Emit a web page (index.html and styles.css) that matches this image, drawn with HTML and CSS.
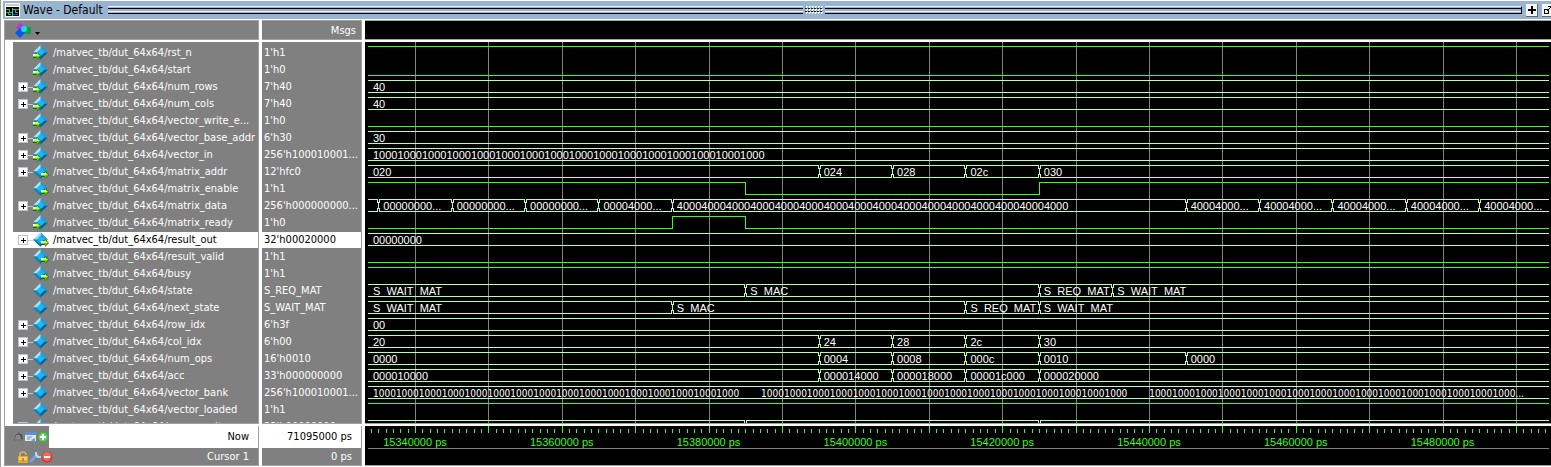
FILE: index.html
```html
<!DOCTYPE html>
<html lang="en">
<head>
<meta charset="utf-8">
<title>Wave - Default</title>
<link rel="stylesheet" href="styles.css">
</head>
<body>
<svg class="defs" aria-hidden="true">
  <symbol id="gem" viewBox="0 0 15 15">
    <path d="M7.500 14.500 0 7.500h15z" fill="#005f96"/>
    <path d="M7.500 0 15 7.500H7.500z" fill="#1c9fdc"/>
    <path d="M7.500 0 0 7.500h7.500z" fill="#a9e4fa"/>
    <path d="M0 7.500 7.500 15V7.500z" fill="#0d88bd"/>
    <path d="M7.500 3.500 11.500 7.500 7.500 11.500 3.500 7.500z" fill="#18b9f4"/>
  </symbol>
  <symbol id="arrow" viewBox="0 0 8 8">
    <path d="M0 2h4V0L8 4 4 8V6H0z" fill="#176b0b"/>
    <path d="M0 2h4V1l3 3-3 3V5H0z" fill="#5bd916"/>
    <path d="M0 2h4V1l3 3H0z" fill="#d9fb4a"/>
    <path d="M0 2h2v2H0z" fill="#fff"/>
  </symbol>
</svg>
<main class="window">
  <header class="titlebar">
    <svg class="app-icon" viewBox="0 0 15 14" shape-rendering="crispEdges" aria-hidden="true">
      <path fill="#fff" d="M0 0h15v14H0z"/><path fill="#000" d="M1 4h13v9H1z"/><path fill="#ccc" d="M1 1h13v2H1z"/>
      <path fill="none" stroke="#20bd65" d="M1 6.500h3v3h3M1 9.500h2v2h3M8 6.500h3M10 6v3h3M11 6.500h3"/>
      <path fill="#19d5e6" d="M7 5h1v8H7z"/><path fill="#5b2bff" d="M8 11h5v1H8z"/>
    </svg>
    <h1 class="title">Wave - Default</h1>
    <span class="grooves"></span><span class="grip"></span><span class="grooves end"></span>
    <button class="tool" aria-label="Zoom pane"><svg viewBox="0 0 12 12"><path d="M6 2v8M2 6h8" stroke="#000" stroke-width="2"/></svg></button>
    <button class="tool" aria-label="Undock"><svg viewBox="0 0 12 12" shape-rendering="crispEdges"><path d="M2.500 5.500h4v4h-4zM5 7l4-4M6 2.500h4v4" stroke="#000" fill="none"/></svg></button>
  </header>
  <section class="panes">
    <div class="head names-head">
      <button class="menu" aria-label="Column menu">
        <svg viewBox="0 0 26 16"><path d="M5 0 10 4 6 8 1 5z" fill="#c32be8"/><path d="M9 4h7v7H9z" fill="#159c42"/><path d="M5 5 10 10 5 15 0 10z" fill="#0758ea"/><circle cx="9" cy="6" r="3" fill="#10dcf3"/><path d="M20 9h5l-2.500 3z" fill="#000"/></svg>
      </button>
    </div>
    <div class="head msgs-head">Msgs</div>
    <div class="head wave-head"></div>
    <ul class="names" id="names"></ul>
    <ul class="msgs" id="msgs"></ul>
    <div class="waves"><div class="plot" id="plot"></div></div>
    <div class="foot">
      <div class="foot-row now">
        <div class="icons">
          <svg viewBox="0 0 36 12" aria-hidden="true">
            <path d="M1 8 3 3h2l1-2 1 2h2l1 5z" fill="#555"/><path d="M0 8h10v2H0z" fill="#777"/><path d="M3 5h4M2 7h6" stroke="#bbb"/>
            <path d="M12 1h11v9H12z" fill="#dce9fb"/><path d="M12 1h11v3H12z" fill="#5b91d6"/><path d="M14 6h5M14 8h3" stroke="#7c8fad"/><path d="m18 9 4-2v5z" fill="#7999c7"/>
            <circle cx="30" cy="6" r="5.500" fill="#45aa42"/><circle cx="30" cy="6" r="4.500" fill="#67c761"/><path d="M30 3v6M27 6h6" stroke="#fff" stroke-width="2"/>
          </svg>
        </div>
        <span class="foot-label">Now</span>
      </div>
      <div class="foot-row cursor">
        <div class="icons">
          <svg viewBox="0 0 36 12" aria-hidden="true">
            <path d="M3 6V3q0-2 3-2t3 3" fill="none" stroke="#d5b46b" stroke-width="1.500"/><path d="M1 5h10v7H1z" fill="#e5a72b"/><path d="M2 6h8v3H2z" fill="#f6cf69"/><path d="M6 7v3" stroke="#7b5615"/>
            <path d="m14 10 6-6" stroke="#6ea3e5" stroke-width="3" stroke-linecap="round"/><path d="M19 1v3l2 2h3" stroke="#b9d6f8" stroke-width="2" fill="none"/>
            <circle cx="30" cy="6" r="5.500" fill="#d43128"/><circle cx="30" cy="5.500" r="4.500" fill="#f06857"/><path d="M27 6h6" stroke="#fff" stroke-width="2"/>
          </svg>
        </div>
        <span class="foot-label">Cursor 1</span>
      </div>
    </div>
    <div class="foot">
      <div class="foot-row now"><span class="foot-label">71095000 ps</span></div>
      <div class="foot-row cursor"><span class="foot-label">0 ps</span></div>
    </div>
    <div class="foot timeline"><div class="ruler" id="ruler"></div></div>
  </section>
</main>
<script src="wave.js"></script>
</body>
</html>
```
FILE: styles.css
```css
:root {
  --ui: "DejaVu Sans Condensed", "Noto Sans", sans-serif;
  --digits: "Liberation Sans", sans-serif;
  --panel: #808080;
  --line: #a0a0a0;
  --bus: #b4ffb4;
  --logic: #33ff1a;
}
* { box-sizing: border-box; }
body { margin: 0; background: #f0f0f0; font: 11px/16px var(--ui); color: #fff; }
ul { margin: 0; padding: 0; list-style: none; }
button { margin: 0; padding: 0; border: 0; background: none; }
svg { display: block; }
.defs { position: absolute; width: 0; height: 0; }

.window { height: 100vh; display: flex; flex-direction: column; border-left: 1px solid var(--line); overflow: hidden; background: #fff; padding: 1px 0 1px 2px; }
.titlebar { display: flex; align-items: center; flex: none; height: 18px; background: #99b4d1; padding-left: 2px; overflow: hidden; }
.app-icon { width: 15px; height: 14px; flex: none; }
.title { margin: 0 5px 0 3px; font-size: 12px; font-weight: 400; line-height: 18px; color: #000; white-space: nowrap; }
.grooves { flex: 1; height: 8px; border-top: 1px solid #e8f4ff; border-bottom: 1px solid #000; background: linear-gradient(transparent 1px, #000 1px 2px, transparent 2px 4px, #e8f4ff 4px 5px, transparent 5px); }
.grooves.end { border-right: 1px solid #000; }
.grip { width: 18px; height: 8px; margin: 0 2px; background: conic-gradient(#fff 25%, transparent 0 50%, #222 0 75%, transparent 0) 0 0 / 3px 3px; }
.tool { flex: none; width: 12px; height: 13px; margin-left: 4px; background: #f4f4f4; border-right: 1px solid #666; border-bottom: 1px solid #666; }
.tool svg { width: 12px; height: 12px; }
.tool:last-child { margin-right: -3px; }

.panes { flex: 1; min-height: 0; display: grid; grid-template-columns: 254px 100px minmax(0, 1fr); grid-template-rows: 20px minmax(0, 1fr) 40px; column-gap: 3px; row-gap: 2px; margin-top: 1px; padding-left: 2px; background: linear-gradient(90deg, #fff 1px, var(--line) 1px 2px, #fff 2px); }
.head { background: var(--panel); border: solid var(--line); border-width: 1px 1px 1px 0; }
.menu { display: block; margin: 2px 0 0 10px; }
.menu svg { width: 26px; height: 16px; }
.msgs-head { text-align: right; line-height: 20px; padding-right: 5px; }
.wave-head { background: #000; border-right: 0; }

.names, .msgs { overflow: hidden; background: var(--panel); border: solid var(--line); border-width: 0 1px 1px 0; padding-top: 3px; }
.names { margin-left: 8px; }
.signal, .msg { height: 16px; margin-bottom: 1px; line-height: 16px; white-space: nowrap; overflow: hidden; }
.signal { display: flex; padding-left: 5px; }
.signal.selected, .msg.selected { background: #fff; color: #000; }
.msg { padding-left: 2px; }
.expander { flex: none; display: flex; align-items: center; width: 15px; height: 16px; }
.expander svg { width: 15px; height: 11px; }
.gem { flex: none; width: 16px; height: 15px; }
.gem svg { width: 16px; height: 15px; overflow: visible; }
.signal-name { padding-left: 4px; }

.waves { background: #000; overflow: hidden; border-bottom: 1px solid var(--line); padding: 0 2px 0 3px; }
.plot { position: relative; height: 100%; padding-top: 3px; }
.gridline { position: absolute; top: 0; bottom: 0; width: 1px; background: #808080; }
.trace { position: relative; display: flex; height: 17px; padding-top: 1px; }
.seg { position: relative; flex: none; height: 13px; white-space: pre; }
.seg.bus { border: solid var(--bus); border-width: 1px 0; padding-left: 5px; font: 11px/13px var(--digits); }
.seg.bus .value { display: block; height: 11px; overflow: hidden; }
.seg.bus.change::before { content: ""; position: absolute; left: -1px; top: -1px; width: 3px; height: 13px; background:
  linear-gradient(var(--bus) 4px, transparent 4px 9px, var(--bus) 9px) 0 0 / 1px 13px no-repeat,
  linear-gradient(transparent 3px, var(--bus) 3px 10px, transparent 10px) 1px 0 / 1px 13px no-repeat,
  linear-gradient(var(--bus) 4px, transparent 4px 9px, var(--bus) 9px) 2px 0 / 1px 13px no-repeat,
  #000; }
.seg.high { border-top: 1px solid var(--logic); }
.seg.low { border-bottom: 1px solid var(--logic); }
.seg.edge { border-left: 1px solid var(--logic); }
.seg.bus .chunks { display: grid; grid-template-columns: 33% 33% 34%; font: 10px/13px var(--ui); }

.foot { overflow: hidden; border: solid var(--line); border-width: 0 1px 1px 0; background: var(--panel); }
.foot-row { display: flex; justify-content: flex-end; align-items: center; padding-right: 9px; }
.now { height: 22px; background: #fff; color: #000; }
.cursor { height: 17px; }
.icons { align-self: stretch; display: flex; align-items: center; margin-right: auto; width: 44px; padding-left: 8px; background: var(--panel); }
.cursor .icons { width: 48px; padding-left: 12px; }
.icons svg { width: 36px; height: 12px; }
.timeline { background: #000; border-right: 0; padding: 0 2px 0 3px; }
.ruler { position: relative; height: 23px; border-bottom: 1px solid #808080; color: var(--logic); }
.tick { position: absolute; top: 3px; width: 1px; height: 4px; background: var(--logic); }
.tick.major { top: 0; height: 7px; }
.tick-label { position: absolute; top: 8px; transform: translateX(-50%); white-space: nowrap; font-family: var(--digits); }
```
FILE: wave.js
```js
const START = 15333600;
const END = 15494500;
const percent = t => (t - START) / (END - START) * 100 + '%';
const k = n => 15000000 + n * 1000;
const bank = '1000'.repeat(16);

// name, message, port direction, trace kind, [time, value] changes
const signals = [
  ['rst_n', "1'h1", 'in', 'logic', [[START, 1]]],
  ['start', "1'h0", 'in', 'logic', [[START, 0]]],
  ['num_rows', "7'h40", 'in', 'bus', [[START, '40']]],
  ['num_cols', "7'h40", 'in', 'bus', [[START, '40']]],
  ['vector_write_e...', "1'h0", 'in', 'logic', [[START, 0]]],
  ['vector_base_addr', "6'h30", 'in', 'bus', [[START, '30']]],
  ['vector_in', "256'h100010001...", 'in', 'bus', [[START, bank]]],
  ['matrix_addr', "12'hfc0", 'out', 'bus', [[START, '020'], [k(395), '024'], [k(405), '028'], [k(415), '02c'], [k(425), '030']]],
  ['matrix_enable', "1'h1", 'out', 'logic', [[START, 1], [k(385), 0], [k(425), 1]]],
  ['matrix_data', "256'h000000000...", 'in', 'bus', [[START, ''], [k(335), '00000000...'], [k(345), '00000000...'], [k(355), '00000000...'], [k(365), '00004000...'], [k(375), '4000'.repeat(16)], [k(445), '40004000...'], [k(455), '40004000...'], [k(465), '40004000...'], [k(475), '40004000...'], [k(485), '40004000...']]],
  ['matrix_ready', "1'h0", 'in', 'logic', [[START, 0], [k(375), 1], [k(385), 0]]],
  ['result_out', "32'h00020000", 'out', 'bus', [[START, '00000000']]],
  ['result_valid', "1'h1", 'out', 'logic', [[START, 0]]],
  ['busy', "1'h1", 'out', 'logic', [[START, 1]]],
  ['state', 'S_REQ_MAT', '', 'enum', [[START, 'S_WAIT_MAT'], [k(385), 'S_MAC'], [k(425), 'S_REQ_MAT'], [k(435), 'S_WAIT_MAT']]],
  ['next_state', 'S_WAIT_MAT', '', 'enum', [[START, 'S_WAIT_MAT'], [k(375), 'S_MAC'], [k(415), 'S_REQ_MAT'], [k(425), 'S_WAIT_MAT']]],
  ['row_idx', "6'h3f", '', 'bus', [[START, '00']]],
  ['col_idx', "6'h00", '', 'bus', [[START, '20'], [k(395), '24'], [k(405), '28'], [k(415), '2c'], [k(425), '30']]],
  ['num_ops', "16'h0010", '', 'bus', [[START, '0000'], [k(395), '0004'], [k(405), '0008'], [k(415), '000c'], [k(425), '0010'], [k(445), '0000']]],
  ['acc', "33'h000000000", '', 'bus', [[START, '000010000'], [k(395), '000014000'], [k(405), '000018000'], [k(415), '00001c000'], [k(425), '000020000']]],
  ['vector_bank', "256'h100010001...", '', 'bus', [[START, [bank, bank, bank + '...']]]],
  ['vector_loaded', "1'h1", '', 'logic', [[START, 1]]],
  ['mac_result', "33'h00000000", '', 'bus', [[START, ''], [k(385), ''], [k(425), '']]]
];

const expander = `<svg viewBox="0 0 15 11" shape-rendering="crispEdges"><path d="M10 5.500h5" stroke="#ccc"/><rect x=".5" y=".5" width="9" height="9" fill="#fff" stroke="#bbc4d4"/><path d="M2.500 5h5M5 2.500v5" stroke="#000"/></svg>`;
const arrows = { in: '<use href="#arrow" x="0" y="7" width="8" height="8"/>', out: '<use href="#arrow" x="8" y="7" width="8" height="8"/>', '': '' };

const names = [], msgs = [], traces = [];
signals.forEach(([name, msg, dir, kind, changes]) => {
  const selected = name === 'result_out' ? ' selected' : '';
  const tag = kind === 'bus' ? `<button class="expander" aria-label="Expand ${name}">${expander}</button>` : '<span class="expander"></span>';
  names.push(`<li class="signal${selected}">${tag}<span class="gem"><svg viewBox="0 0 16 15"><use href="#gem" width="15" height="15"/>${arrows[dir]}</svg></span><span class="signal-name">/matvec_tb/dut_64x64/${name}</span></li>`);
  msgs.push(`<li class="msg${selected}">${msg}</li>`);
  const segs = changes.map(([t, v], i) => {
    const end = i + 1 < changes.length ? changes[i + 1][0] : END;
    const width = (end - t) / (END - START) * 100;
    if (kind === 'logic') return `<span class="seg ${v ? 'high' : 'low'}${i ? ' edge' : ''}" style="width:${width}%"></span>`;
    const text = Array.isArray(v) ? `<span class="value chunks">${v.map(c => `<span class="chunk">${c}</span>`).join('')}</span>` : `<span class="value">${v}</span>`;
    return `<span class="seg bus${i ? ' change' : ''}" style="width:${width}%">${text}</span>`;
  });
  traces.push(`<div class="trace">${segs.join('')}</div>`);
});

let grid = '', ticks = '';
for (let t = k(334); t < END; t += 1000) {
  const major = t % 10000 === 0;
  if (major) grid += `<span class="gridline" style="left:${percent(t)}"></span>`;
  ticks += `<span class="tick${major ? ' major' : ''}" style="left:${percent(t)}"></span>`;
  if (t % 20000 === 0) ticks += `<span class="tick-label" style="left:${percent(t)}">${t} ps</span>`;
}
document.getElementById('names').innerHTML = names.join('');
document.getElementById('msgs').innerHTML = msgs.join('');
document.getElementById('plot').innerHTML = grid + traces.join('');
document.getElementById('ruler').innerHTML = ticks;
```
